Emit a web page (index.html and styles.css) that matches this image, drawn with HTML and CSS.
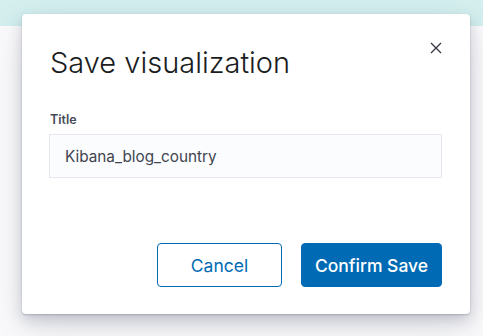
FILE: index.html
```html
<!DOCTYPE html>
<html>
<head>
<meta charset="utf-8">
<link rel="stylesheet" href="styles.css">
</head>
<body>
<div class="page">
  <div class="band"></div>
  <div class="rest"></div>
</div>
<div class="modal">
  <button class="close" aria-label="Close">
    <svg width="12" height="12" viewBox="0 0 12 12"><path d="M1 1L11 11M11 1L1 11" stroke="#343741" stroke-width="1.3" fill="none"/></svg>
  </button>
  <h1 class="title">Save visualization</h1>
  <div class="field">
    <label class="label">Title</label>
    <div class="input">Kibana_blog_country</div>
  </div>
  <div class="footer">
    <button class="btn btn-empty">Cancel</button>
    <button class="btn btn-fill">Confirm Save</button>
  </div>
</div>
</body>
</html>
```
FILE: styles.css
```css
html, body { margin: 0; padding: 0; }
body {
  width: 483px;
  height: 336px;
  overflow: hidden;
  font-family: Inter, "Noto Sans", sans-serif;
  background: #fafbfc;
  position: relative;
}
.page { display: flex; flex-direction: column; height: 336px; }
.band { height: 26px; background: #d4efee; }
.rest { flex: 1; background: #fbfbfc; }
.modal {
  position: absolute;
  left: 22px;
  top: 14px;
  width: 448px;
  height: 300px;
  box-sizing: border-box;
  background: #fff;
  border-radius: 4px;
  box-shadow: 0 1px 2px rgba(60,65,80,0.25), 0 6px 14px rgba(60,65,90,0.22), 0 16px 40px rgba(60,65,90,0.14);
  padding: 29px 28px 27px 28px;
  display: flex;
  flex-direction: column;
}
.close {
  position: absolute;
  right: 27px;
  top: 27px;
  width: 14px;
  height: 14px;
  padding: 0;
  border: 0;
  background: none;
  display: flex;
  align-items: center;
  justify-content: center;
}
.title {
  margin: 0;
  font-size: 29px;
  font-weight: 300;
  color: #1a1c21;
  line-height: 40px;
}
.field { margin-top: 29px; display: flex; flex-direction: column; }
.label {
  font-size: 12.5px;
  font-weight: 600;
  color: #454a55;
  line-height: 16px;
  margin-bottom: 6px;
}
.input {
  height: 44px;
  box-sizing: border-box;
  border: 1px solid #e4e7ec;
  background: #fbfcfd;
  padding: 0 15px;
  display: flex;
  align-items: center;
  font-size: 15.3px;
  color: #3f4450;
  margin-left: -1px;
}
.footer {
  margin-top: auto;
  display: flex;
  justify-content: flex-end;
  gap: 19px;
}
.btn {
  height: 44px;
  box-sizing: border-box;
  border-radius: 4px;
  font-family: Inter, "Noto Sans", sans-serif;
  font-size: 17.5px;
  font-weight: 400;
}
.btn-empty {
  width: 125px;
  background: #fff;
  border: 1px solid #006bb4;
  color: #006bb4;
}
.btn-fill {
  width: 141px;
  background: #006bb4;
  border: 1px solid #006bb4;
  color: #fff;
  font-weight: 500;
}
```
